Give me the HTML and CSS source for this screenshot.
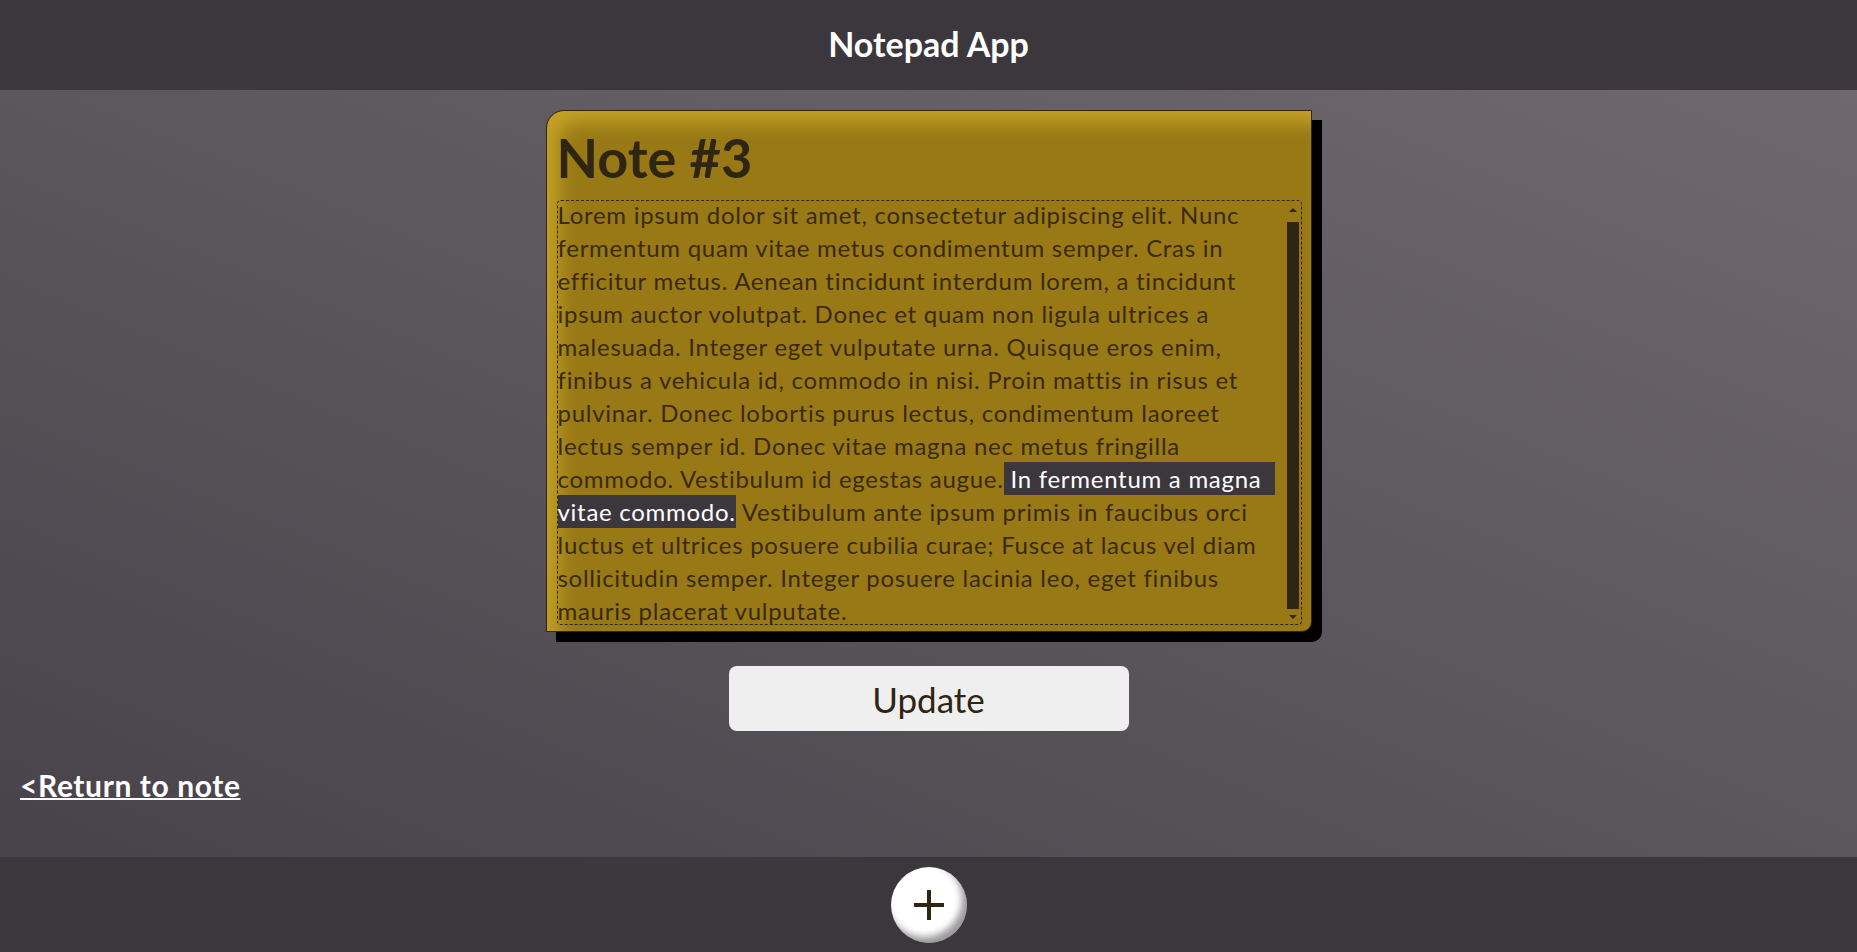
FILE: index.html
```html
<!DOCTYPE html>
<html lang="en">
<head>
<meta charset="utf-8">
<title>Notepad App</title>
<link rel="stylesheet" href="styles.css">
</head>
<body>
<header class="top-bar">
  <h1 class="app-title">Notepad App</h1>
</header>
<main class="content">
  <article class="note-card">
    <h2 class="note-title">Note #3</h2>
    <div class="note-editor">
      <div class="note-text">Lorem ipsum dolor sit amet, consectetur adipiscing elit. Nunc fermentum quam vitae metus condimentum semper. Cras in efficitur metus. Aenean tincidunt interdum lorem, a tincidunt ipsum auctor volutpat. Donec et quam non ligula ultrices a malesuada. Integer eget vulputate urna. Quisque eros enim, finibus a vehicula id, commodo in nisi. Proin mattis in risus et pulvinar. Donec lobortis purus lectus, condimentum laoreet lectus semper id. Donec vitae magna nec metus fringilla commodo. Vestibulum id egestas augue.<span class="selected sel-end"> In fermentum a magna </span><span class="selected">vitae commodo.</span> Vestibulum ante ipsum primis in faucibus orci luctus et ultrices posuere cubilia curae; Fusce at lacus vel diam sollicitudin semper. Integer posuere lacinia leo, eget finibus mauris placerat vulputate.</div>
      <div class="scrollbar">
        <span class="arrow arrow-up"></span>
        <span class="thumb"></span>
        <span class="arrow arrow-down"></span>
      </div>
    </div>
  </article>
  <div class="actions">
    <button class="update-btn" type="button">Update</button>
  </div>
  <a class="return-link" href="#">&lt;Return to note</a>
</main>
<footer class="bottom-bar">
  <button class="add-btn" type="button" aria-label="Add note">
    <svg width="32" height="32" viewBox="0 0 32 32"><path d="M16 1v30M1 16h30" stroke="#2e2512" stroke-width="4"/></svg>
  </button>
</footer>
</body>
</html>
```
FILE: styles.css
```css
* { box-sizing: border-box; }
html, body { margin: 0; padding: 0; }
body {
  font-family: "Lato", "Noto Sans", sans-serif;
  width: 1857px;
  height: 952px;
  overflow: hidden;
  display: flex;
  flex-direction: column;
}
.top-bar {
  height: 90px;
  background: #3c373c;
  display: flex;
  align-items: center;
  justify-content: center;
  padding-bottom: 4px;
}
.app-title {
  margin: 0;
  color: #fff;
  font-size: 34px;
  font-weight: 700;
}
.content {
  height: 767px;
  background: linear-gradient(to top right, #48434a, #6f696f);
  padding-top: 20px;
  display: flex;
  flex-direction: column;
}
.note-card {
  width: 766px;
  height: 522px;
  margin: 0 auto;
  background: #987916;
  border: 1px solid #2e2512;
  border-radius: 18px 0 10px 0;
  box-shadow: 10px 10px 0 #000, inset 12px 12px 18px #c4a126;
  padding: 15px 9px 6px 10px;
  display: flex;
  flex-direction: column;
}
.note-title {
  margin: 0;
  font-size: 54px;
  font-weight: 700;
  line-height: 1.2;
  color: #2e2512;
}
.note-editor {
  margin-top: 9px;
  flex: 1;
  border: 1px dashed #2e2512;
  border-radius: 4px;
  display: flex;
  overflow: hidden;
  padding-right: 1px;
}
.note-text {
  flex: 1;
  font-size: 24px;
  letter-spacing: 0.72px;
  line-height: 33px;
  color: #3a2a0c;
  margin-top: -3px;
}
.selected {
  background: #3c373c;
  color: #fff;
  padding: 2px 0;
}
.sel-end { padding-right: 14px; }
.scrollbar {
  width: 14px;
  display: flex;
  flex-direction: column;
  align-items: center;
  padding: 7px 0 5px;
}
.arrow {
  width: 0;
  height: 0;
  border-left: 4px solid transparent;
  border-right: 4px solid transparent;
}
.arrow-up { border-bottom: 4px solid #2e2512; }
.arrow-down { border-top: 4px solid #2e2512; }
.thumb {
  width: 12px;
  flex: 1;
  background: #2e2512;
  margin: 10px 0 6px;
}
.actions {
  display: flex;
  justify-content: center;
  margin-top: 34px;
}
.update-btn {
  width: 400px;
  height: 65px;
  border: none;
  border-radius: 8px;
  background: #efefef;
  color: #2e2512;
  font-family: inherit;
  font-size: 35px;
}
.return-link {
  align-self: flex-start;
  margin: 36px 0 0 20px;
  color: #fff;
  font-size: 30px;
  font-weight: 700;
  letter-spacing: 0.6px;
  text-decoration-thickness: 2px;
}
.bottom-bar {
  height: 95px;
  background: #3c373c;
  display: flex;
  justify-content: center;
  padding-top: 10px;
}
.add-btn {
  width: 76px;
  height: 76px;
  border-radius: 50%;
  border: none;
  background: #fff;
  box-shadow: inset -5px -6px 7px rgba(0,0,0,0.4);
  display: flex;
  align-items: center;
  justify-content: center;
  padding: 0;
}
```
